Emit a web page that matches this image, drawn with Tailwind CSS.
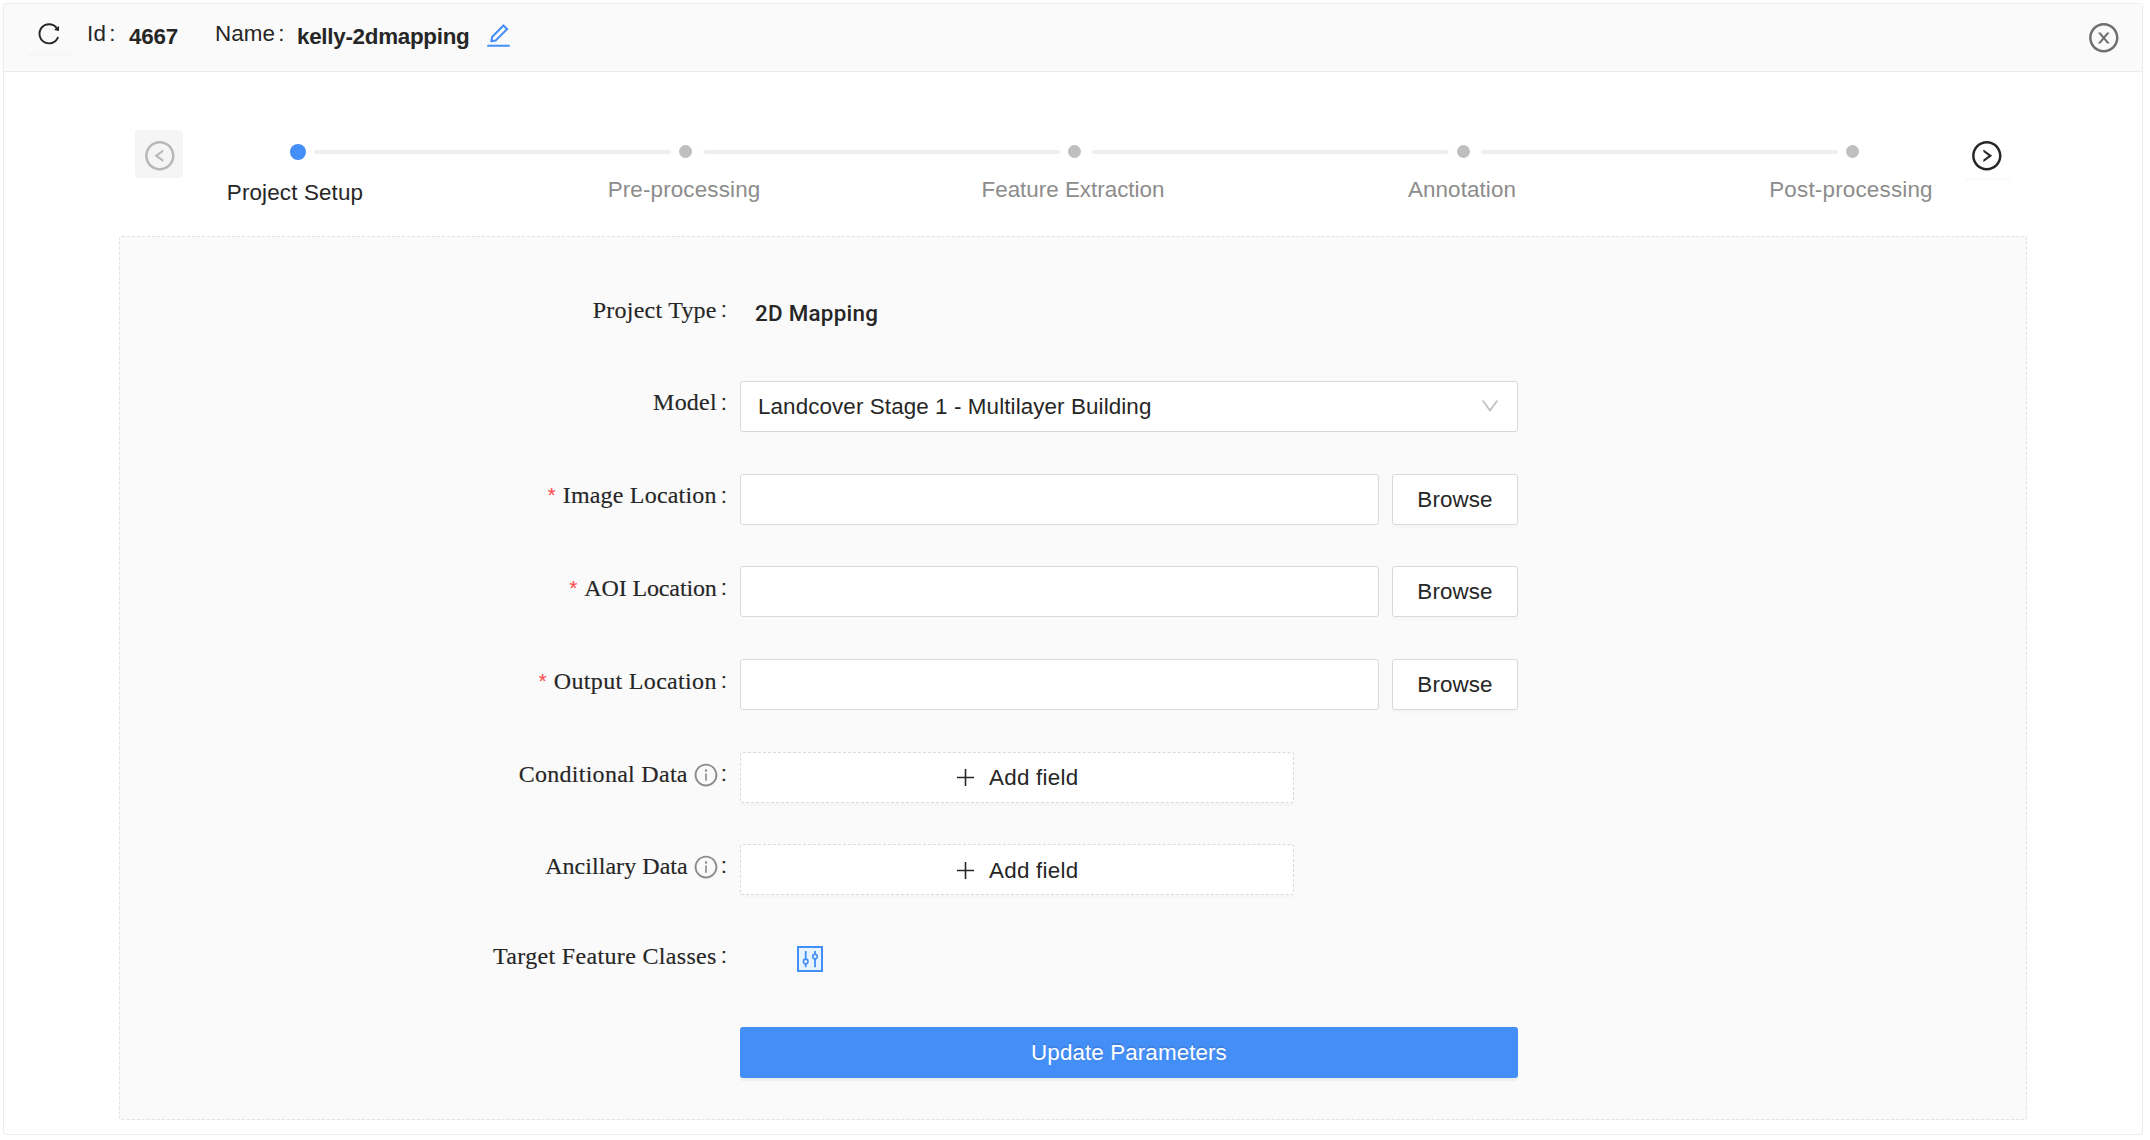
<!DOCTYPE html>
<html lang="en">
<head>
<meta charset="utf-8">
<title>kelly-2dmapping</title>
<script src="https://cdn.jsdelivr.net/npm/@tailwindcss/browser@4"></script>
</head>
<body class="bg-white font-['Liberation_Sans',Arial,sans-serif] text-[22.4px] tracking-[0.1px] text-[#262626]">
<svg class="hidden">
  <symbol id="ring" viewBox="0 0 1024 1024"><path d="M512 64C264.6 64 64 264.6 64 512s200.6 448 448 448 448-200.6 448-448S759.4 64 512 64zm0 820c-205.4 0-372-166.6-372-372s166.6-372 372-372 372 166.6 372 372-166.6 372-372 372z"/></symbol>
  <symbol id="info" viewBox="0 0 1024 1024"><use href="#ring"/><path d="M464 336a48 48 0 1 0 96 0 48 48 0 1 0-96 0zm72 112h-48c-4.4 0-8 3.6-8 8v272c0 4.4 3.6 8 8 8h48c4.4 0 8-3.6 8-8V456c0-4.4-3.6-8-8-8z"/></symbol>
</svg>
<div class="h-[1140px] pt-[3px] pl-[3px]">
<div class="flex h-[1132px] w-[2140px] flex-col rounded-[3px] border border-[#ececec]">
  <header class="flex h-[68px] shrink-0 items-start border-b border-[#ececec] bg-[#fafafa] whitespace-nowrap">
    <button class="ml-[22px] mt-[3px] flex h-[46px] w-[45px] items-center justify-center rounded-[3px] shadow-[0_3px_0_rgba(0,0,0,0.016)]">
      <svg class="mt-[7px] ml-px size-[25.6px]" viewBox="0 0 1024 1024" fill="currentColor"><path d="M909.1 209.3l-56.4 44.1C775.8 155.1 656.2 92 521.9 92 290 92 102.3 279.5 102 511.5 101.7 743.7 289.8 932 521.9 932c181.3 0 335.8-115 394.6-276.1 1.5-4.2-.7-8.9-4.9-10.3l-56.7-19.5a8 8 0 0 0-10.1 4.8c-1.8 5-3.8 10-5.9 14.9-17.3 41-42.1 77.8-73.7 109.4A344.77 344.77 0 0 1 655.9 829c-42.3 17.9-87.4 27-133.8 27-46.5 0-91.5-9.1-133.8-27A341.5 341.5 0 0 1 279 755.2a342.16 342.16 0 0 1-73.7-109.4c-17.9-42.4-27-87.4-27-133.9s9.1-91.5 27-133.9c17.3-41 42.1-77.8 73.7-109.4 31.6-31.6 68.4-56.4 109.3-73.8 42.3-17.9 87.4-27 133.8-27 46.5 0 91.5 9.1 133.8 27a341.5 341.5 0 0 1 109.3 73.8c9.9 9.9 19.2 20.4 27.8 31.4l-60.2 47a8 8 0 0 0 3 14.1l175.6 43c5 1.2 9.9-2.6 9.9-7.7l.8-180.9c-.1-6.6-7.8-10.3-13-6.2z"/></svg>
    </button>
    <div class="ml-[16px] mt-[13px] flex w-[42px] leading-[33px]"><span class="tracking-[0.3px]">Id</span><span class="ml-[3px]">:</span></div>
    <div class="mt-[16px] w-[86px] leading-[33px] font-bold tracking-[-0.2px]">4667</div>
    <div class="mt-[13px] flex w-[82px] leading-[33px]"><span>Name</span><span class="ml-[3px]">:</span></div>
    <div class="mt-[16px] w-[187px] leading-[33px] font-bold tracking-[-0.28px]">kelly-2dmapping</div>
    <svg class="mt-[17px] size-[29px] text-[#448ef7]" viewBox="0 0 1024 1024" fill="currentColor"><path d="M257.7 752c2 0 4-.2 6-.5L431.9 722c2-.4 3.9-1.3 5.3-2.8l423.9-423.9a9.96 9.96 0 0 0 0-14.1L694.9 114.9c-1.9-1.9-4.4-2.9-7.1-2.9s-5.2 1-7.1 2.9L256.8 538.8c-1.5 1.5-2.4 3.3-2.8 5.3l-29.5 168.2a33.5 33.5 0 0 0 9.4 29.8c6.6 6.4 14.9 9.9 23.8 9.9zm67.4-174.4L687.8 215l73.3 73.3-362.7 362.6-88.9 15.7 15.6-89zM880 836H144c-17.7 0-32 14.3-32 32v36c0 4.4 3.6 8 8 8h784c4.4 0 8-3.6 8-8v-36c0-17.7-14.3-32-32-32z"/></svg>
    <svg class="mt-[17px] mr-[21px] ml-auto size-[33.6px] text-[#6f6f6f]" viewBox="0 0 1024 1024" fill="currentColor"><use href="#ring"/><path d="M685.4 354.8c0-4.4-3.6-8-8-8l-66 .3L512 465.6l-99.3-118.4-66.1-.3c-4.4 0-8 3.5-8 8 0 1.9.7 3.7 1.9 5.2l130.1 155L340.5 670a8.32 8.32 0 0 0-1.9 5.2c0 4.4 3.6 8 8 8l66.1-.3L512 564.4l99.3 118.4 66 .3c4.4 0 8-3.5 8-8 0-1.9-.7-3.7-1.9-5.2L553.5 515l130.1-155c1.2-1.4 1.8-3.3 1.8-5.2z"/></svg>
  </header>

  <section class="flex h-[164px] shrink-0 items-start pl-[131px] pt-[58px]">
    <button class="flex h-[48px] w-[48px] items-center justify-center rounded-[4px] bg-[#f5f5f5] text-[#b8b8b8]">
      <svg class="mt-[3px] ml-px size-[33.6px]" viewBox="0 0 1024 1024" fill="currentColor"><use href="#ring"/><path d="M603.3 327.5l-246 178a7.95 7.95 0 0 0 0 12.9l246 178c5.3 3.8 12.7 0 12.7-6.5V643c0-10.2-4.9-19.9-13.2-25.9L457.4 512l145.4-105.2c8.3-6 13.2-15.6 13.2-25.9V334c0-6.5-7.4-10.3-12.7-6.5z"/></svg>
    </button>
    <ol class="ml-[17px] flex text-[#8c8c8c]">
      <li class="w-[389px]">
        <div class="flex h-[43px] items-center pl-[90px]"><i class="size-[16px] shrink-0 rounded-full bg-[#448ef7]"></i><i class="ml-[8px] h-[4px] w-[357px] shrink-0 rounded-[2px] bg-[#efefef]"></i></div>
        <div class="mt-[3px] w-[190px] text-center leading-[33px] tracking-[0.15px] text-[#262626]">Project Setup</div>
      </li>
      <li class="w-[389px]">
        <div class="flex h-[43px] items-center pl-[90px]"><i class="size-[12.5px] shrink-0 rounded-full bg-[#bfbfbf]"></i><i class="ml-[11.5px] h-[4px] w-[357px] shrink-0 rounded-[2px] bg-[#efefef]"></i></div>
        <div class="w-[190px] text-center leading-[33px] tracking-[0.15px]">Pre-processing</div>
      </li>
      <li class="w-[389px]">
        <div class="flex h-[43px] items-center pl-[90px]"><i class="size-[12.5px] shrink-0 rounded-full bg-[#bfbfbf]"></i><i class="ml-[11.5px] h-[4px] w-[357px] shrink-0 rounded-[2px] bg-[#efefef]"></i></div>
        <div class="w-[190px] text-center leading-[33px] tracking-normal">Feature Extraction</div>
      </li>
      <li class="w-[389px]">
        <div class="flex h-[43px] items-center pl-[90px]"><i class="size-[12.5px] shrink-0 rounded-full bg-[#bfbfbf]"></i><i class="ml-[11.5px] h-[4px] w-[357px] shrink-0 rounded-[2px] bg-[#efefef]"></i></div>
        <div class="w-[190px] text-center leading-[33px]">Annotation</div>
      </li>
      <li class="w-[207px]">
        <div class="flex h-[43px] items-center pl-[90px]"><i class="size-[12.5px] shrink-0 rounded-full bg-[#bfbfbf]"></i></div>
        <div class="w-[190px] text-center leading-[33px] tracking-[0.2px]">Post-processing</div>
      </li>
    </ol>
    <button class="flex h-[48px] w-[48px] items-center justify-center rounded-[4px] bg-white shadow-[0_3px_0_rgba(0,0,0,0.016)]">
      <svg class="mt-[3px] size-[33.6px]" viewBox="0 0 1024 1024" fill="currentColor"><use href="#ring"/><path d="M666.7 505.5l-246-178A8 8 0 0 0 408 334v46.9c0 10.2 4.9 19.9 13.2 25.9L566.6 512 421.2 617.2c-8.3 6-13.2 15.6-13.2 25.9V690c0 6.5 7.4 10.3 12.7 6.5l246-178c4.4-3.2 4.4-9.8 0-13z"/></svg>
    </button>
  </section>

  <form class="ml-[115px] flex h-[884px] w-[1908px] flex-col gap-[41.7px] rounded-[3px] border border-dashed border-[#e2e2e2] bg-[#fafafa] pt-[51.3px] whitespace-nowrap">
    <div class="flex h-[51px] items-start">
      <label class="flex w-[620px] justify-end pr-[13px] font-['Liberation_Serif',serif] text-[24px] leading-[44px] tracking-[0.24px] [-webkit-text-stroke:0.15px]">Project Type<span class="ml-[4px] font-['Liberation_Sans',sans-serif] text-[22.4px] tracking-normal">:</span></label>
      <b class="ml-[15px] font-['Roboto',sans-serif] font-medium leading-[50.7px] tracking-[0.25px]">2D Mapping</b>
    </div>
    <div class="flex h-[51px] items-start">
      <label class="flex w-[620px] justify-end pr-[13px] font-['Liberation_Serif',serif] text-[24px] leading-[43px] tracking-[0.2px] [-webkit-text-stroke:0.15px]">Model<span class="ml-[4px] font-['Liberation_Sans',sans-serif] text-[22.4px] tracking-normal">:</span></label>
      <div class="flex h-full w-[778px] items-center justify-between rounded-[3px] border border-[#d9d9d9] bg-white pr-[16px] pl-[17px]">Landcover Stage 1 - Multilayer Building
        <svg class="size-[22px] text-[#bfbfbf]" viewBox="0 0 1024 1024" fill="currentColor"><path d="M884 256h-75c-5.1 0-9.9 2.5-12.9 6.6L512 654.2 227.9 262.6c-3-4.1-7.8-6.6-12.9-6.6h-75c-6.5 0-10.3 7.4-6.5 12.7l352.6 486.1c12.8 17.6 39 17.6 51.7 0l352.6-486.1c3.9-5.3.1-12.7-6.4-12.7z"/></svg>
      </div>
    </div>
    <div class="flex h-[51px] items-start">
      <label class="flex w-[620px] justify-end pr-[13px] font-['Liberation_Serif',serif] text-[24px] leading-[43px] tracking-[0.2px] [-webkit-text-stroke:0.15px]"><span class="mr-[7px] font-['Liberation_Sans',sans-serif] text-[20px] text-[#ff4d4f]">*</span>Image Location<span class="ml-[4px] font-['Liberation_Sans',sans-serif] text-[22.4px] tracking-normal">:</span></label>
      <input class="h-full w-[639px] rounded-[3px] border border-[#d9d9d9] bg-white">
      <button type="button" class="ml-[13px] h-full w-[126px] rounded-[3px] border border-[#d9d9d9] bg-white pt-px shadow-[0_3px_0_rgba(0,0,0,0.016)]">Browse</button>
    </div>
    <div class="flex h-[51px] items-start">
      <label class="flex w-[620px] justify-end pr-[13px] font-['Liberation_Serif',serif] text-[24px] leading-[44px] tracking-[-0.12px] [-webkit-text-stroke:0.15px]"><span class="mr-[7px] font-['Liberation_Sans',sans-serif] text-[20px] text-[#ff4d4f]">*</span>AOI Location<span class="ml-[4px] font-['Liberation_Sans',sans-serif] text-[22.4px] tracking-normal">:</span></label>
      <input class="h-full w-[639px] rounded-[3px] border border-[#d9d9d9] bg-white">
      <button type="button" class="ml-[13px] h-full w-[126px] rounded-[3px] border border-[#d9d9d9] bg-white shadow-[0_3px_0_rgba(0,0,0,0.016)]">Browse</button>
    </div>
    <div class="flex h-[51px] items-start">
      <label class="flex w-[620px] justify-end pr-[13px] font-['Liberation_Serif',serif] text-[24px] leading-[44px] tracking-[0.33px] [-webkit-text-stroke:0.15px]"><span class="mr-[7px] font-['Liberation_Sans',sans-serif] text-[20px] text-[#ff4d4f]">*</span>Output Location<span class="ml-[4px] font-['Liberation_Sans',sans-serif] text-[22.4px] tracking-normal">:</span></label>
      <input class="h-full w-[639px] rounded-[3px] border border-[#d9d9d9] bg-white">
      <button type="button" class="ml-[13px] h-full w-[126px] rounded-[3px] border border-[#d9d9d9] bg-white shadow-[0_3px_0_rgba(0,0,0,0.016)]">Browse</button>
    </div>
    <div class="flex h-[51px] items-start">
      <label class="flex w-[620px] justify-end pr-[13px] font-['Liberation_Serif',serif] text-[24px] leading-[44px] tracking-[0.28px] [-webkit-text-stroke:0.15px]">Conditional Data<svg class="mt-[10px] ml-[5px] size-[26px] text-[#8c8c8c]" fill="currentColor"><use href="#info"/></svg><span class="ml-[2px] font-['Liberation_Sans',sans-serif] text-[22.4px] tracking-normal">:</span></label>
      <button type="button" class="flex h-full w-[554px] items-center rounded-[3px] border border-dashed border-[#d9d9d9] bg-white pt-px pl-[216px] tracking-[0.25px] shadow-[0_3px_0_rgba(0,0,0,0.016)]"><svg class="mr-[15px] size-[17px]" viewBox="0 0 17 17" stroke="currentColor" stroke-width="1.6"><path d="M8.5 0v17M0 8.5h17"/></svg>Add field</button>
    </div>
    <div class="flex h-[51px] items-start">
      <label class="flex w-[620px] justify-end pr-[13px] font-['Liberation_Serif',serif] text-[24px] leading-[44px] tracking-[0.05px] [-webkit-text-stroke:0.15px]">Ancillary Data<svg class="mt-[10px] ml-[5px] size-[26px] text-[#8c8c8c]" fill="currentColor"><use href="#info"/></svg><span class="ml-[2px] font-['Liberation_Sans',sans-serif] text-[22.4px] tracking-normal">:</span></label>
      <button type="button" class="flex h-full w-[554px] items-center rounded-[3px] border border-dashed border-[#d9d9d9] bg-white pt-px pl-[216px] tracking-[0.25px] shadow-[0_3px_0_rgba(0,0,0,0.016)]"><svg class="mr-[15px] size-[17px]" viewBox="0 0 17 17" stroke="currentColor" stroke-width="1.6"><path d="M8.5 0v17M0 8.5h17"/></svg>Add field</button>
    </div>
    <div class="-mt-[2px] flex h-[51px] items-start">
      <label class="flex w-[620px] justify-end pr-[13px] font-['Liberation_Serif',serif] text-[24px] leading-[42px] tracking-[0.33px] [-webkit-text-stroke:0.15px]">Target Feature Classes<span class="ml-[4px] font-['Liberation_Sans',sans-serif] text-[22.4px] tracking-normal">:</span></label>
      <svg class="mt-[10.5px] ml-[56.5px] size-[26px]" viewBox="0 0 26 26" fill="#e6f4ff" stroke="#448ef7" stroke-width="2"><path d="M1 1h24v24H1z"/><path d="M8.7 5v16.3M18 5v16.3" stroke-width="1.8"/><circle cx="8.7" cy="15.4" r="2.3" stroke-width="1.6"/><circle cx="18" cy="10.6" r="2.3" stroke-width="1.6"/></svg>
    </div>
    <button type="button" class="-mt-px ml-[620px] h-[51px] w-[778px] shrink-0 rounded-[3px] bg-[#448ef7] pt-px text-white shadow-[0_3px_0_rgba(0,0,0,0.045)] [text-shadow:0_-2px_0_rgba(0,0,0,0.12)]">Update Parameters</button>
  </form>
</div>
</div>
</body>
</html>
